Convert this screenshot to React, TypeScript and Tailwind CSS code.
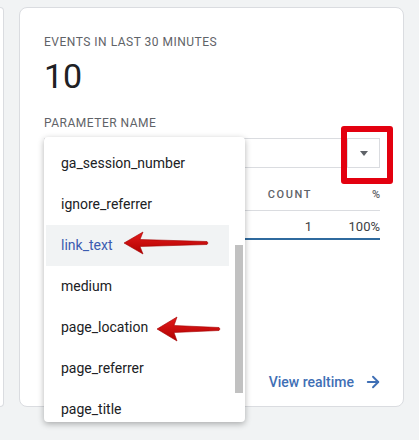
import { ArrowRight } from 'lucide-react'

const items = [
  'ga_session_number',
  'ignore_referrer',
  'link_text',
  'medium',
  'page_location',
  'page_referrer',
  'page_title',
]

function RedArrow({ x, y, len, head, half }: { x: number; y: number; len: number; head: number; half: number }) {
  const pts = [
    [0, 0],
    [head, -half],
    [head - 3, -3.5],
    [len - 1, -1.5],
    [len, 0],
    [len - 1, 1.5],
    [head - 3, 3.5],
    [head, half],
  ]
    .map(([px, py]) => `${x + px},${y + py}`)
    .join(' ')
  return <polygon points={pts} fill="url(#arrowFill)" stroke="#a30000" strokeWidth="0.6" strokeLinejoin="round" />
}

export default function App() {
  return (
    <div className="relative flex h-[440px] w-[419px] items-start overflow-hidden bg-[#f1f3f4] pt-[7px] font-['Roboto',sans-serif]">
      <div className="h-[400px] w-[4px] rounded-r-lg border-y border-r border-[#dadce0] bg-white" />

      <div className="relative ml-[15px] flex h-[400px] w-[385px] flex-col rounded-lg border border-[#dadce0] bg-white pl-[24px] pr-[23px] pt-[26px]">
        <p className="text-[12px] leading-4 tracking-[0.5px] text-[#5f6368]">EVENTS IN LAST 30 MINUTES</p>
        <p className="mt-[6px] text-[34px] leading-[40px] text-[#202124]">10</p>
        <p className="mt-[19px] text-[12px] leading-4 tracking-[0.5px] text-[#5f6368]">PARAMETER NAME</p>

        <div className="mt-[7px] flex h-[30px] border border-[#dadce0]">
          <div className="flex-1" />
          <div className="flex w-[32px] items-center justify-center border-l border-[#dadce0]">
            <span className="h-0 w-0 border-x-[4px] border-t-[5px] border-x-transparent border-t-[#5f6368]" />
          </div>
        </div>

        <div className="mt-[19px] flex border-b border-[#dadce0] pb-[7px] text-[11px] font-medium leading-4 tracking-[1.6px] text-[#5f6368]">
          <div className="flex-1" />
          <div className="text-right">COUNT</div>
          <div className="w-[68px] text-right tracking-normal">%</div>
        </div>
        <div className="flex border-b-2 border-[#2f6a9e] pb-[3px] pt-[8px] text-[13px] leading-4 text-[#3c4043]">
          <div className="flex-1" />
          <div className="text-right">1</div>
          <div className="w-[68px] text-right">100%</div>
        </div>

        <div className="flex-1" />
        <div className="flex justify-end pb-[14px] pr-[-2px]">
          <a className="-mr-[2px] flex items-center gap-[10px] text-[14px] font-medium leading-5 text-[#3f6fb5]">
            View realtime
            <ArrowRight className="size-[18px]" strokeWidth={2.5} />
          </a>
        </div>

        <div className="absolute left-[321px] top-[118px] h-[58px] w-[52px] rounded-[3px] border-[6px] border-[#e3000f]" />

        <div className="absolute left-[24px] top-[129px] h-[285px] w-[201px] overflow-hidden rounded-[4px] bg-white pt-[6px] shadow-[0_2px_6px_rgba(0,0,0,0.3)]">
          {items.map((item) => (
            <div
              key={item}
              className={
                item === 'link_text'
                  ? 'ml-[2px] flex h-[41px] w-[183px] items-center bg-[#f1f3f4] pl-[15px] text-[14px] text-[#3b5bb0]'
                  : 'ml-[2px] flex h-[41px] w-[183px] items-center pl-[15px] text-[14px] text-[#202124]'
              }
            >
              {item}
            </div>
          ))}
          <div className="absolute right-[2px] top-[108px] h-[148px] w-[8px] bg-[#c1c1c1]" />
        </div>
      </div>

      <svg className="pointer-events-none absolute left-0 top-0" width="419" height="440">
        <defs>
          <linearGradient id="arrowFill" x1="0" y1="0" x2="0" y2="1">
            <stop offset="0" stopColor="#e31b1b" />
            <stop offset="1" stopColor="#b00000" />
          </linearGradient>
        </defs>
        <RedArrow x={124} y={243} len={84} head={19} half={11} />
        <RedArrow x={157} y={329} len={63} head={20} half={12} />
      </svg>
    </div>
  )
}
